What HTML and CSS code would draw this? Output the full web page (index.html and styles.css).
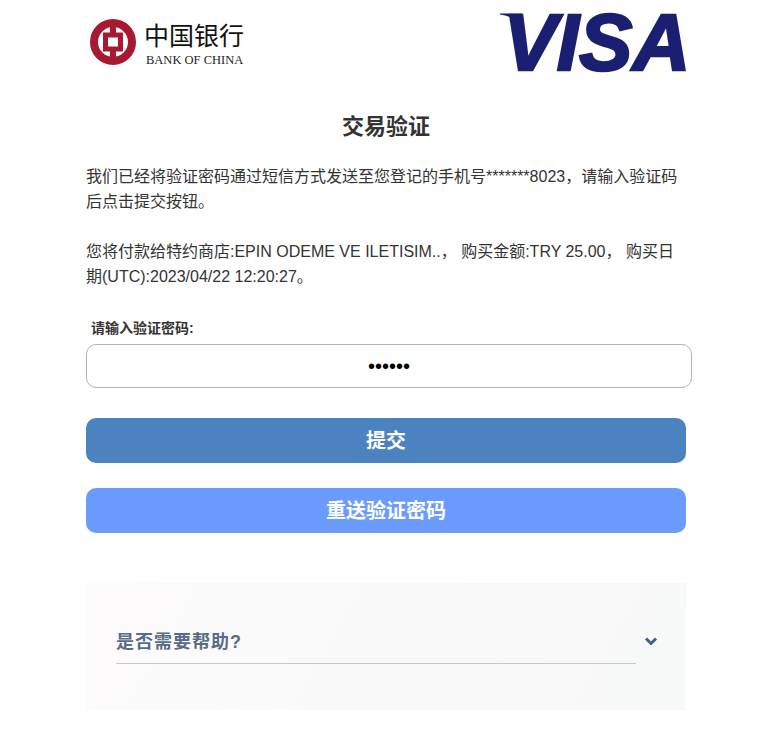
FILE: index.html
```html
<!DOCTYPE html>
<html lang="zh-CN">
<head>
  <meta charset="UTF-8" />
  <title>交易验证</title>
  <link rel="stylesheet" href="styles.css">
</head>
<body>
  <div class="page">
    <div class="header">
      <div class="boc">
        <svg class="boc-mark" viewBox="0 0 46 46" width="46" height="46">
          <circle cx="23" cy="23" r="19" fill="none" stroke="#a8182f" stroke-width="8"/>
          <rect x="20" y="3" width="6" height="40" fill="#a8182f"/>
          <rect x="15.500" y="16" width="15" height="14" fill="#fff" stroke="#a8182f" stroke-width="5"/>
        </svg>
        <div class="boc-name">
          <div class="boc-cn">中国银行</div>
          <div class="boc-en">BANK OF CHINA</div>
        </div>
      </div>
      <svg class="visa" viewBox="0 0 196 64" width="196" height="64">
        <path d="M2 1.500 L24 1.500 L27 22 C24 11 14 4 2 2.500 Z" fill="#1a1f71"/>
        <text x="5.500" y="58" class="visa-text">VISA</text>
      </svg>
    </div>

    <h1 class="title">交易验证</h1>

    <p class="msg">我们已经将验证密码通过短信方式发送至您登记的手机号*******8023，请输入验证码后点击提交按钮。</p>
    <p class="msg">您将付款给特约商店:EPIN ODEME VE ILETISIM..， 购买金额:TRY 25.00， 购买日期(UTC):2023/04/22 12:20:27。</p>

    <label class="field-label" for="otp">请输入验证密码:</label>
    <input class="field" id="otp" type="password" value="123456">

    <button class="btn btn-submit">提交</button>
    <button class="btn btn-resend">重送验证密码</button>

    <div class="help">
      <div class="help-row">
        <span class="help-title">是否需要帮助?</span>
        <svg class="chevron" viewBox="0 0 14 10" width="14" height="10">
          <path d="M2 2.500 L7 7.500 L12 2.500" fill="none" stroke="#4a5f7d" stroke-width="3"/>
        </svg>
      </div>
    </div>
  </div>
</body>
</html>
```

FILE: styles.css
```css
* {
  box-sizing: border-box;
}
html, body {
  margin: 0;
  padding: 0;
  background: #fff;
}
body {
  font-family: "Liberation Sans", "Noto Sans CJK SC", sans-serif;
  color: #333;
}
.page {
  width: 600px;
  margin-left: 86px;
  padding-bottom: 23px;
}
.header {
  display: flex;
  justify-content: space-between;
  align-items: flex-start;
  height: 72px;
  padding-top: 12px;
}
.boc {
  display: flex;
  align-items: flex-start;
  padding: 7px 0 0 4px;
}
.boc-mark {
  margin-right: 8px;
}
.boc-name {
  display: flex;
  flex-direction: column;
}
.boc-cn {
  font-family: "Noto Sans CJK SC", sans-serif;
  font-size: 25px;
  line-height: 30px;
  color: #111;
  white-space: nowrap;
}
.boc-en {
  font-family: "Liberation Serif", serif;
  font-size: 12.500px;
  line-height: 14px;
  color: #222;
  margin: 4px 0 0 2px;
  white-space: nowrap;
}
.visa {
  margin-right: -8px;
  overflow: visible;
}
.visa-text {
  font-family: "Liberation Sans", sans-serif;
  font-weight: bold;
  font-style: italic;
  font-size: 80px;
  fill: #1a1f71;
  stroke: #1a1f71;
  stroke-width: 2.500px;
}
.title {
  margin: 0;
  padding-top: 39px;
  font-size: 22px;
  line-height: 32px;
  font-weight: bold;
  text-align: center;
}
.msg {
  margin: 0 0 25px;
  font-size: 16px;
  line-height: 25px;
  color: #333;
}
.msg:first-of-type {
  margin-top: 21px;
}
.field-label {
  display: block;
  margin: 0 0 6px 5px;
  padding-top: 4px;
  font-size: 14px;
  line-height: 20px;
  font-weight: bold;
  color: #333;
}
.field {
  display: block;
  width: 606px;
  height: 44px;
  border: 1px solid #b3b3b3;
  border-radius: 10px;
  background: #fff;
  text-align: center;
  font-size: 20px;
  color: #000;
  outline: none;
  padding: 0 12px;
}
.btn {
  display: block;
  width: 600px;
  height: 45px;
  padding: 0 0 2px;
  border: none;
  border-radius: 10px;
  color: #fff;
  font-family: inherit;
  font-size: 20px;
  font-weight: bold;
  text-align: center;
  cursor: pointer;
}
.btn-submit {
  margin-top: 30px;
  background: #4a83c0;
}
.btn-resend {
  margin-top: 25px;
  background: #6b9bff;
}
.help {
  margin-top: 50px;
  height: 127px;
  padding: 40px 30px 0;
  background: linear-gradient(120deg, #fdfbfb, #f7f8f8);
}
.help-row {
  display: flex;
  align-items: center;
  position: relative;
  width: 520px;
  height: 41px;
  padding-bottom: 2px;
  border-bottom: 1px solid #c4c8c8;
}
.help-title {
  font-size: 18px;
  font-weight: bold;
  letter-spacing: 1px;
  line-height: 36px;
  color: #5a6b85;
}
.chevron {
  position: absolute;
  right: -22px;
  top: 13px;
}
```
